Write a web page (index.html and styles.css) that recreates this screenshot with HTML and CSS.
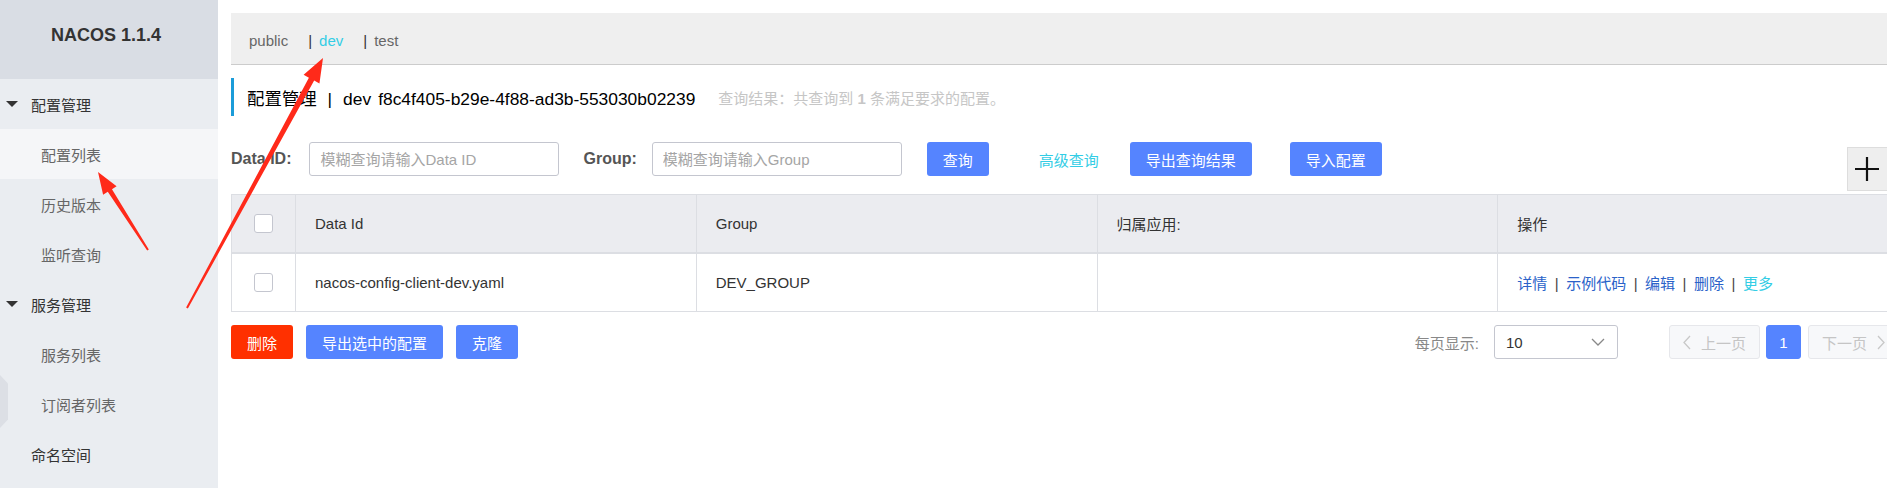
FILE: index.html
```html
<!DOCTYPE html>
<html lang="zh-CN">
<head>
<meta charset="utf-8">
<title>Nacos</title>
<link rel="stylesheet" href="styles.css">
</head>
<body>
<div class="app">
  <aside class="sidebar">
    <div class="brand">NACOS 1.1.4</div>
    <ul class="menu">
      <li class="group"><span class="caret"></span>配置管理</li>
      <li class="item active">配置列表</li>
      <li class="item">历史版本</li>
      <li class="item">监听查询</li>
      <li class="group"><span class="caret"></span>服务管理</li>
      <li class="item">服务列表</li>
      <li class="item">订阅者列表</li>
      <li class="single">命名空间</li>
    </ul>
    <div class="handle"></div>
  </aside>

  <main class="main">
    <div class="ns-bar">
      <span class="ns">public</span>
      <span class="ns"><i class="ns-sep">|</i><span class="ns-active">dev</span></span>
      <span class="ns"><i class="ns-sep">|</i>test</span>
    </div>

    <div class="page-title">
      <h1><span>配置管理</span><span class="t-sep">|</span><span>dev</span><span class="t-id">f8c4f405-b29e-4f88-ad3b-553030b02239</span></h1>
      <span class="result">查询结果：共查询到 <b>1</b> 条满足要求的配置。</span>
    </div>

    <div class="search">
      <div class="field"><label class="lbl">Data ID:</label><input class="input" placeholder="模糊查询请输入Data ID"></div>
      <div class="field"><label class="lbl">Group:</label><input class="input" placeholder="模糊查询请输入Group"></div>
      <button class="btn">查询</button>
      <a class="adv">高级查询</a>
      <button class="btn">导出查询结果</button>
      <button class="btn btn-import">导入配置</button>
    </div>

    <div class="plus-btn">
      <svg width="26" height="26" viewBox="0 0 26 26"><path d="M1 13H25M13 1V25" stroke="#111" stroke-width="2.2" fill="none"/></svg>
    </div>

    <table class="grid">
      <colgroup><col class="c-check"><col><col><col><col></colgroup>
      <thead>
        <tr>
          <th class="cell-check"><span class="cb"></span></th>
          <th>Data Id</th>
          <th>Group</th>
          <th>归属应用:</th>
          <th>操作</th>
        </tr>
      </thead>
      <tbody>
        <tr>
          <td class="cell-check"><span class="cb"></span></td>
          <td>nacos-config-client-dev.yaml</td>
          <td>DEV_GROUP</td>
          <td></td>
          <td class="ops"><a class="lk">详情</a><span class="sep">|</span><a class="lk">示例代码</a><span class="sep">|</span><a class="lk">编辑</a><span class="sep">|</span><a class="lk">删除</a><span class="sep">|</span><a class="lk more">更多</a></td>
        </tr>
      </tbody>
    </table>

    <div class="footer">
      <button class="btn btn-danger">删除</button>
      <button class="btn">导出选中的配置</button>
      <button class="btn">克隆</button>
      <div class="pager">
        <span class="pager-label">每页显示:</span>
        <div class="select"><span>10</span>
          <svg width="14" height="8" viewBox="0 0 14 8"><polyline points="1,1 7,7 13,1" fill="none" stroke="#888" stroke-width="1.3"/></svg>
        </div>
        <div class="pg pg-prev">
          <svg width="8" height="15" viewBox="0 0 8 15"><polyline points="7,1 1,7.5 7,14" fill="none" stroke="#c8c8c8" stroke-width="1.3"/></svg>
          <span>上一页</span>
        </div>
        <div class="pg pg-cur">1</div>
        <div class="pg pg-next">
          <span>下一页</span>
          <svg width="8" height="15" viewBox="0 0 8 15"><polyline points="1,1 7,7.5 1,14" fill="none" stroke="#c8c8c8" stroke-width="1.3"/></svg>
        </div>
      </div>
    </div>
  </main>
</div>

<svg class="annot" width="1887" height="488" viewBox="0 0 1887 488">
  <polygon fill="#ff2a1a" points="148.84,249.46 111.97,189.17 116.6,186.2 98,172 103.1,194.8 107.77,191.87 147.16,250.54"/>
  <polygon fill="#ff2a1a" points="187.88,308.48 314.17,80.51 319.44,83.38 323,58 303.62,74.78 308.89,77.65 186.12,307.52"/>
</svg>
</body>
</html>
```

FILE: styles.css
```css
* { box-sizing: border-box; }

body {
  margin: 0;
  width: 1887px;
  height: 488px;
  overflow: hidden;
  background: #fff;
  color: #333;
  font-family: "Liberation Sans", "Noto Sans CJK SC", sans-serif;
  font-size: 15px;
  position: relative;
}

.app {
  display: flex;
  height: 488px;
}

/* Sidebar */
.sidebar {
  width: 218px;
  flex: none;
  background: #eaedf1;
  position: relative;
}

.brand {
  height: 79px;
  background: #d9dde4;
  display: flex;
  align-items: center;
  justify-content: center;
  padding: 0 6px 9px 0;
  font-size: 18px;
  font-weight: bold;
  color: #333;
}

.menu {
  list-style: none;
  margin: 0;
  padding: 0;
}

.menu li {
  height: 50px;
  display: flex;
  align-items: center;
}

.group {
  padding-left: 6px;
  color: #333;
}

.caret {
  width: 0;
  height: 0;
  border-left: 6px solid transparent;
  border-right: 6px solid transparent;
  border-top: 6px solid #333;
  margin-right: 13px;
}

.item {
  padding-left: 41px;
  color: #666;
}

.item.active {
  background: #f5f6f8;
}

.single {
  padding-left: 31px;
  color: #333;
}

.handle {
  position: absolute;
  left: 0;
  top: 375px;
  width: 8px;
  height: 53px;
  background: #dcdfe5;
  clip-path: polygon(0 0, 100% 16%, 100% 84%, 0 100%);
}

/* Main */
.main {
  flex: none;
  width: 1681px;
  padding: 13px 0 0 13px;
  position: relative;
}

.ns-bar {
  height: 52px;
  background: #efefef;
  border-bottom: 1px solid #ccc;
  display: flex;
  align-items: center;
  padding: 4px 0 0 18px;
  color: #666;
}

.ns {
  margin-right: 20px;
}

.ns-sep {
  font-style: normal;
  color: #333;
  margin-right: 7px;
}

.ns-active {
  color: #33cde5;
}

.page-title {
  margin-top: 13px;
  height: 38px;
  border-left: 3px solid #1b9cd9;
  padding-left: 13px;
  display: flex;
  align-items: center;
}

.page-title h1 {
  margin: 0;
  font-size: 17.4px;
  font-weight: normal;
  color: #000;
}

.t-sep {
  margin: 0 11px;
}

.t-id {
  margin-left: 7px;
}

.result {
  margin-left: 23px;
  font-size: 15px;
  color: #c6c6c6;
}

/* Search */
.search {
  margin-top: 26px;
  height: 34px;
  display: flex;
  align-items: center;
}

.field {
  display: flex;
  align-items: center;
  margin-right: 24px;
}

.field + .field {
  margin-right: 25px;
}

.lbl {
  font-size: 16px;
  font-weight: bold;
  color: #555;
  margin-right: 18px;
}

.field + .field .lbl {
  margin-right: 15px;
}

.input {
  width: 250px;
  height: 34px;
  border: 1px solid #c4c6cf;
  border-radius: 3px;
  padding: 0 10px;
  font: inherit;
  color: #333;
  background: #fff;
}

.input::placeholder {
  color: #a5a5a5;
}

.btn {
  height: 34px;
  padding: 0 16px;
  border: none;
  border-radius: 3px;
  background: #5584ff;
  color: #fff;
  font: inherit;
  display: inline-flex;
  align-items: center;
}

.btn-danger {
  background: #ff3000;
}

.btn-import {
  margin-left: 38px;
}

.adv {
  margin: 0 31px 0 50px;
  color: #33cde5;
}

.plus-btn {
  position: absolute;
  left: 1629px;
  top: 147px;
  width: 44px;
  height: 44px;
  background: #eeeeee;
  border: 1px solid #dddddd;
  display: flex;
  align-items: center;
  justify-content: center;
  padding-right: 4px;
}

/* Table */
.grid {
  margin-top: 18px;
  width: 1668px;
  border-collapse: collapse;
  table-layout: fixed;
}

.c-check {
  width: 64px;
}

.grid th,
.grid td {
  border: 1px solid #dcdee3;
  text-align: left;
  font-weight: normal;
  padding: 0 0 0 19px;
  color: #333;
}

.grid th {
  height: 58px;
  background: #ebecf0;
  border-bottom: 2px solid #dcdee3;
}

.grid td {
  height: 59px;
}

.grid .cell-check {
  padding: 0;
  text-align: center;
}

.cb {
  display: inline-block;
  width: 19px;
  height: 19px;
  border: 1px solid #c4c6cf;
  border-radius: 3px;
  background: #fff;
  vertical-align: middle;
}

.ops .lk {
  color: #2a62c9;
}

.ops .more {
  color: #33cde5;
}

.ops .sep {
  margin: 0 7.5px;
  color: #444;
}

/* Footer */
.footer {
  margin-top: 13px;
  width: 1668px;
  display: flex;
  align-items: center;
  gap: 13px;
}

.pager {
  margin-left: auto;
  display: flex;
  align-items: center;
}

.pager-label {
  color: #888;
}

.select {
  margin-left: 15px;
  width: 124px;
  height: 34px;
  border: 1px solid #c4c6cf;
  border-radius: 3px;
  display: flex;
  align-items: center;
  justify-content: space-between;
  padding: 0 12px 0 11px;
}

.pg {
  height: 34px;
  border: 1px solid #e6e7eb;
  border-radius: 3px;
  background: #f7f8fa;
  color: #c5c5c5;
  display: flex;
  align-items: center;
  justify-content: center;
  gap: 10px;
}

.pg-prev {
  margin-left: 51px;
  width: 91px;
}

.pg-cur {
  margin-left: 6px;
  width: 35px;
  background: #5584ff;
  border-color: #5584ff;
  color: #fff;
}

.pg-next {
  margin-left: 7px;
  width: 91px;
}

.annot {
  position: absolute;
  left: 0;
  top: 0;
  pointer-events: none;
}
```
